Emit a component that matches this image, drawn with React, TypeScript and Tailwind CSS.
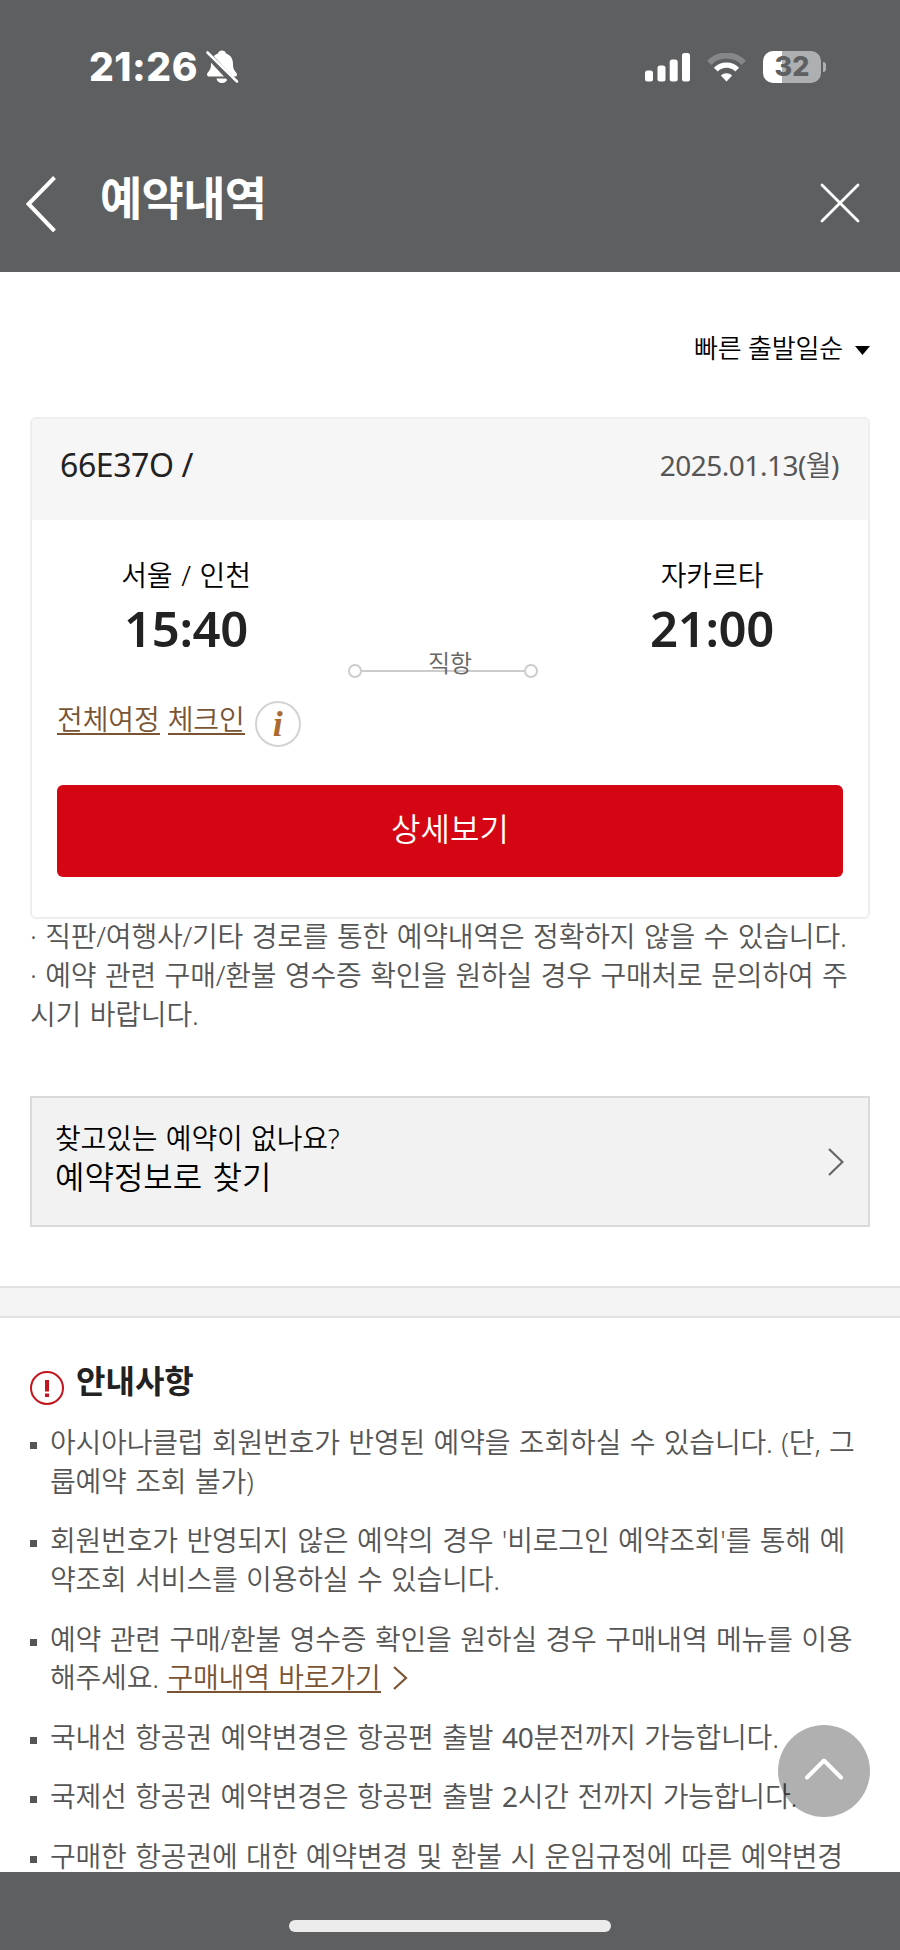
import type { ReactNode } from "react";

function StatusBar() {
  return (
    <div className="flex h-[134px] items-center justify-between pl-[89px] pr-[74px] text-white">
      <div className="flex items-center gap-[7px]">
        <span className="font-[Inter] text-[39px] leading-[134px] font-extrabold tracking-[0.5px]">21:26</span>
        <svg width="34" height="36" viewBox="0 0 34 36" fill="currentColor">
          <path d="M17 1.5c-2 0-3.6 1.2-4 3C8 6.400 6 10 6 15c0 5-1.500 6.500-3.500 9-1 1.300-.5 3.500 1.500 3.500h26c2 0 2.500-2.200 1.500-3.500C29.500 21.500 28 20 28 15c0-5-2-8.600-7-10.500-.4-1.800-2-3-4-3z" />
          <path d="M11.500 29.500h11c-.5 2.800-2.500 4.500-5.500 4.500s-5-1.700-5.500-4.500z" />
          <path d="M0 2.500 30 34.500" stroke="#5e5f61" strokeWidth="6.500" />
          <path d="M2.500 3.500 32 32.500" stroke="currentColor" strokeWidth="2.600" strokeLinecap="round" />
        </svg>
      </div>
      <div className="flex items-center">
        <svg width="45" height="29" viewBox="0 0 45 29" fill="currentColor">
          <rect x="0" y="17.500" width="8" height="11" rx="2.500" />
          <rect x="12.500" y="12.500" width="8" height="16" rx="2.500" />
          <rect x="24.700" y="6.500" width="8" height="22" rx="2.500" />
          <rect x="37" y="0" width="8" height="28.500" rx="2.500" />
        </svg>
        <svg className="ml-[17px]" width="39" height="29" viewBox="0 0 39 29" fill="none" stroke="currentColor">
          <path d="M2.300 9.800a24 24 0 0 1 34.400 0" strokeWidth="6" opacity=".25" />
          <path d="M8.800 16.600a15 15 0 0 1 21.400 0" strokeWidth="5.400" />
          <path d="M19.500 28.500 13.800 22.500a8.500 8.500 0 0 1 11.400 0z" fill="currentColor" stroke="none" />
        </svg>
        <div className="ml-[17px] flex h-8 w-[58px] items-center justify-center overflow-hidden rounded-[10px] bg-linear-to-r from-white from-33% to-[#aeafb0] to-33%">
          <span className="font-[Inter] text-[27px] leading-8 font-extrabold text-[#5e5f61]">32</span>
        </div>
        <div className="ml-[2px] h-[10px] w-[3px] rounded-r-full bg-[#aeafb0]" />
      </div>
    </div>
  );
}

function TitleBar() {
  return (
    <div className="flex h-[138px] items-start pt-[39px] pl-[26px] pr-[40px] text-white">
      <svg className="mt-[3px]" width="30" height="56" viewBox="0 0 30 56" fill="none" stroke="currentColor" strokeWidth="4">
        <path d="M28.500 1.500 2.500 28l26 27" />
      </svg>
      <h1 className="-mt-[1px] ml-[44px] flex-1 text-[46px] leading-[50px] font-bold tracking-[-0.7px]">예약내역</h1>
      <svg className="mt-[10px]" width="40" height="40" viewBox="0 0 40 40" fill="none" stroke="currentColor" strokeWidth="2.800" strokeLinecap="round">
        <path d="M2 2l36 36M38 2 2 38" />
      </svg>
    </div>
  );
}

function Place({ name, time }: { name: string; time: string }) {
  return (
    <div className="flex w-[200px] flex-col items-center">
      <span className="text-[28px] leading-[40px] font-[350] tracking-[-0.1px] text-black [word-spacing:1.500px]">{name}</span>
      <span className="mt-[3px] text-[49px] leading-[60px] font-semibold tracking-[-0.3px] text-[#222]">{time}</span>
    </div>
  );
}

function FlightCard() {
  return (
    <div className="h-[502px] overflow-hidden rounded-[6px] border-2 border-[#eee]">
      <div className="flex h-[101px] items-center justify-between bg-[#f6f6f6] pr-[29px] pl-[28px] pb-[10px]">
        <span className="text-[32px] tracking-[-0.400px] text-[#222]">66E37O /</span>
        <span className="text-[28px] font-[350] tracking-[-0.500px] text-[#555]">
          <span className="font-normal">2025.01.13(</span>월<span className="font-normal">)</span>
        </span>
      </div>
      <div className="flex h-[175px] justify-between pt-[35px] pr-[56px] pl-[54px]">
        <Place name="서울 / 인천" time="15:40" />
        <div className="relative mt-[102px] mr-[12px] flex h-[28px] w-[190px] items-center">
          <div className="size-[14px] rounded-full border-2 border-[#ccc]" />
          <div className="h-[2px] flex-1 bg-[#ccc]" />
          <div className="size-[14px] rounded-full border-2 border-[#ccc]" />
          <span className="absolute inset-x-0 top-[-10px] pl-[14px] text-center text-[24px] leading-[32px] font-[350] text-[#666]">직항</span>
        </div>
        <Place name="자카르타" time="21:00" />
      </div>
      <div className="flex h-[90px] items-start pl-[25px] text-[28px] leading-[40px] font-[350] tracking-[-0.1px] text-[#7a5433]">
        <a className="mt-[5px] h-[35px] border-b-2 border-[#7a5433] leading-[39px]">전체여정</a>
        <a className="mt-[5px] ml-[8px] h-[35px] border-b-2 border-[#7a5433] leading-[39px]">체크인</a>
        <span className="mt-[6px] ml-[10px] flex size-[46px] items-center justify-center rounded-full border-2 border-[#d3d3d3] font-['Liberation_Serif'] text-[36px] leading-none font-bold text-[#ab6a30] italic">
          i
        </span>
      </div>
      <button className="mx-[25px] h-[92px] w-[786px] rounded-[6px] bg-[#d50614] pb-[5px] text-[32px] font-[350] text-white">
        상세보기
      </button>
    </div>
  );
}

function Notice({ children }: { children: ReactNode }) {
  return (
    <li className="mb-[20.600px] flex">
      <span className="mt-[19px] mr-[13px] size-[7px] shrink-0 bg-[#555]" />
      <p className="whitespace-nowrap">{children}</p>
    </li>
  );
}

export default function App() {
  return (
    <div className="relative flex h-[1950px] w-[900px] flex-col overflow-hidden bg-white font-['Noto_Sans','Noto_Sans_CJK_KR',sans-serif]">
      <header className="h-[272px] shrink-0 bg-[#5e5f61]">
        <StatusBar />
        <TitleBar />
      </header>

      <main className="h-[1600px] shrink-0 overflow-hidden bg-white">
        <div className="flex h-[145px] items-center justify-end gap-[12px] pr-[30px] text-black">
          <span className="mt-[8px] text-[26px] font-[350] tracking-[-0.2px]">빠른 출발일순</span>
          <svg className="mt-[11px]" width="15" height="9" viewBox="0 0 15 9">
            <path d="M0 0h15L7.500 9z" />
          </svg>
        </div>

        <section className="px-[30px]">
          <FlightCard />
          <p className="-mt-[2px] text-[28px] leading-[38.900px] font-[350] tracking-[-0.2px] whitespace-nowrap text-[#555] [word-spacing:1.500px]">
            · 직판/여행사/기타 경로를 통한 예약내역은 정확하지 않을 수 있습니다.
            <br />· 예약 관련 구매/환불 영수증 확인을 원하실 경우 구매처로 문의하여 주
            <br />
            시기 바랍니다.
          </p>

          <a className="mt-[62px] flex h-[131px] items-center justify-between border-2 border-[#dadada] bg-[#f2f2f2] pr-[24px] pl-[23px] text-black">
            <span className="flex flex-col pb-[7px] font-[350]">
              <span className="text-[28px] leading-[38px] tracking-[-0.2px] [word-spacing:1.500px]">찾고있는 예약이 없나요?</span>
              <span className="text-[32px] leading-[40px] [word-spacing:2px]">예약정보로 찾기</span>
            </span>
            <svg className="mt-[2px]" width="16" height="28" viewBox="0 0 16 28" fill="none" stroke="#666" strokeWidth="2.200">
              <path d="M1 1l13.500 13L1 27" />
            </svg>
          </a>
        </section>

        <div className="mt-[59px] h-[32px] border-y-2 border-[#e2e2e2] bg-[#f4f4f4]" />

        <section className="px-[30px] pt-[41px]">
          <div className="flex h-[64px] items-start">
            <svg className="mt-[12px]" width="34" height="34" viewBox="0 0 34 34" fill="none" stroke="#c4151c">
              <circle cx="17" cy="17" r="16" strokeWidth="2" />
              <path d="M17 9v11.500M17 22.500v3.500" strokeWidth="4" />
            </svg>
            <h2 className="ml-[12px] text-[32px] leading-[44px] font-semibold text-[#222]">안내사항</h2>
          </div>
          <ul className="text-[28px] leading-[38.900px] font-[350] tracking-[-0.2px] text-[#555] [word-spacing:1.500px]">
            <Notice>
              아시아나클럽 회원번호가 반영된 예약을 조회하실 수 있습니다. (단, 그
              <br />
              룹예약 조회 불가)
            </Notice>
            <Notice>
              회원번호가 반영되지 않은 예약의 경우 '비로그인 예약조회'를 통해 예
              <br />
              약조회 서비스를 이용하실 수 있습니다.
            </Notice>
            <Notice>
              예약 관련 구매/환불 영수증 확인을 원하실 경우 구매내역 메뉴를 이용
              <br />
              해주세요.{" "}
              <a className="inline-block h-[35px] border-b-2 border-[#7a5433] align-top text-[#7a5433]">구매내역 바로가기</a>
              <svg className="mb-[5px] ml-[12px] inline-block" width="15" height="24" viewBox="0 0 15 24" fill="none" stroke="#7a5433" strokeWidth="2.200">
                <path d="M1 1l12 11L1 23" />
              </svg>
            </Notice>
            <Notice>
              국내선 항공권 예약변경은 항공편 출발 <span className="font-normal">40</span>분전까지 가능합니다.
            </Notice>
            <Notice>
              국제선 항공권 예약변경은 항공편 출발 <span className="font-normal">2</span>시간 전까지 가능합니다.
            </Notice>
            <Notice>구매한 항공권에 대한 예약변경 및 환불 시 운임규정에 따른 예약변경</Notice>
          </ul>
        </section>
      </main>

      {/* Scroll to top */}
      <button className="absolute right-[30px] bottom-[133px] flex size-[92px] items-center justify-center rounded-full bg-black/31">
        <svg className="mb-[5px]" width="40" height="24" viewBox="0 0 40 24" fill="none" stroke="#fff" strokeWidth="4" strokeLinecap="round" strokeLinejoin="round">
          <path d="M3 20.500 20 3.500l17 17" />
        </svg>
      </button>

      <footer className="flex h-[78px] shrink-0 items-start justify-center bg-[#5e5f61] pt-[48px]">
        <div className="h-[12px] w-[322px] rounded-full bg-[#ebebeb]" />
      </footer>
    </div>
  );
}
